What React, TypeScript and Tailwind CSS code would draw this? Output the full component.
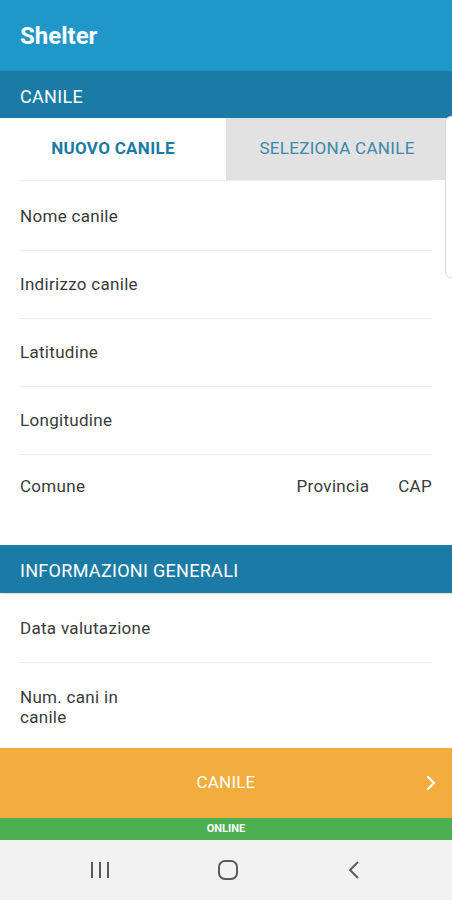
import React from 'react';

const font = { fontFamily: 'Roboto, "Noto Sans", sans-serif' };

const Field: React.FC<{ label: string; last?: boolean }> = ({ label, last }) => (
    <div className={`mx-5 h-[68px] flex items-center ${last ? '' : 'border-b border-[#ececec]'}`}>
        <span className="text-[17px] tracking-[0.3px] text-[#3a3a3a]">{label}</span>
    </div>
);

const SectionHeader: React.FC<{ title: string; h: string }> = ({ title, h }) => (
    <div className={`${h} bg-[#1b7ba5] flex items-center px-5 pt-[3px] shadow-[0_1px_2px_rgba(0,0,0,0.15)]`}>
        <span className="text-white text-[18px] tracking-[0.3px]">{title}</span>
    </div>
);

const App: React.FC = () => {
    return (
        <div className="w-[452px] h-[900px] bg-white flex flex-col relative overflow-hidden" style={font}>
            <div className="h-[71px] bg-[#1f97c8] flex items-center px-5 shrink-0">
                <h1 className="text-white text-[24px] font-bold">Shelter</h1>
            </div>
            <SectionHeader title="CANILE" h="h-[47px]" />

            <div className="flex h-[62px] shrink-0">
                <div className="w-[226px] flex items-center justify-center bg-white">
                    <span className="text-[#1b7ba5] font-bold text-[17px] tracking-[0.3px]">NUOVO CANILE</span>
                </div>
                <div className="w-[222px] flex items-center justify-center bg-[#e2e2e2]">
                    <span className="text-[#3a88ab] text-[17px] tracking-[0.3px]">SELEZIONA CANILE</span>
                </div>
            </div>
            <div className="mx-5 border-b border-[#ececec]" />

            <div className="flex-1 flex flex-col">
                <div className="h-[2px]" />
                <Field label="Nome canile" />
                <Field label="Indirizzo canile" />
                <Field label="Latitudine" />
                <Field label="Longitudine" />
                <div className="mx-5 h-[90px] flex items-start pt-[19px] text-[17px] tracking-[0.3px] text-[#3a3a3a]">
                    <span className="flex-1">Comune</span>
                    <span className="mr-[29px]">Provincia</span>
                    <span>CAP</span>
                </div>

                <SectionHeader title="INFORMAZIONI GENERALI" h="h-[48px]" />
                <div className="h-[2px]" />
                <Field label="Data valutazione" />
                <div className="mx-5 h-[84px] flex items-start pt-[24px]">
                    <span className="text-[17px] tracking-[0.3px] text-[#3a3a3a] leading-[20px] w-[120px]">Num. cani in canile</span>
                </div>
            </div>

            <div className="h-[70px] bg-[#f3ad3c] flex items-center justify-center relative shrink-0">
                <span className="text-white text-[17px] tracking-[0.2px]">CANILE</span>
                <svg className="absolute right-[15px] top-[26px]" width="12" height="18" viewBox="0 0 12 18" fill="none">
                    <path d="M3 3l6 6-6 6" stroke="white" strokeWidth="2.4" strokeLinecap="round" strokeLinejoin="round" />
                </svg>
            </div>
            <div className="h-[22px] bg-[#4caf50] flex items-center justify-center shrink-0">
                <span className="text-white text-[11px] font-bold">ONLINE</span>
            </div>

            <div className="h-[60px] bg-[#f2f2f2] flex items-center shrink-0 pl-[89px]">
                <svg width="22" height="20" viewBox="0 0 22 20">
                    <path d="M3 2v16M11 2v16M19 2v16" stroke="#5b5b5b" strokeWidth="2" />
                </svg>
                <svg width="22" height="22" viewBox="0 0 22 22" className="ml-[106px]">
                    <rect x="2" y="2" width="18" height="18" rx="6" fill="none" stroke="#5b5b5b" strokeWidth="2" />
                </svg>
                <svg width="14" height="22" viewBox="0 0 14 22" className="ml-[108px]">
                    <path d="M11 3L3 11l8 8" fill="none" stroke="#5b5b5b" strokeWidth="2" />
                </svg>
            </div>

            <div className="absolute left-[445px] top-[116px] w-[12px] h-[162px] rounded-[6px] border border-[#d9d9d9] bg-white" />
        </div>
    );
};

export default App;
